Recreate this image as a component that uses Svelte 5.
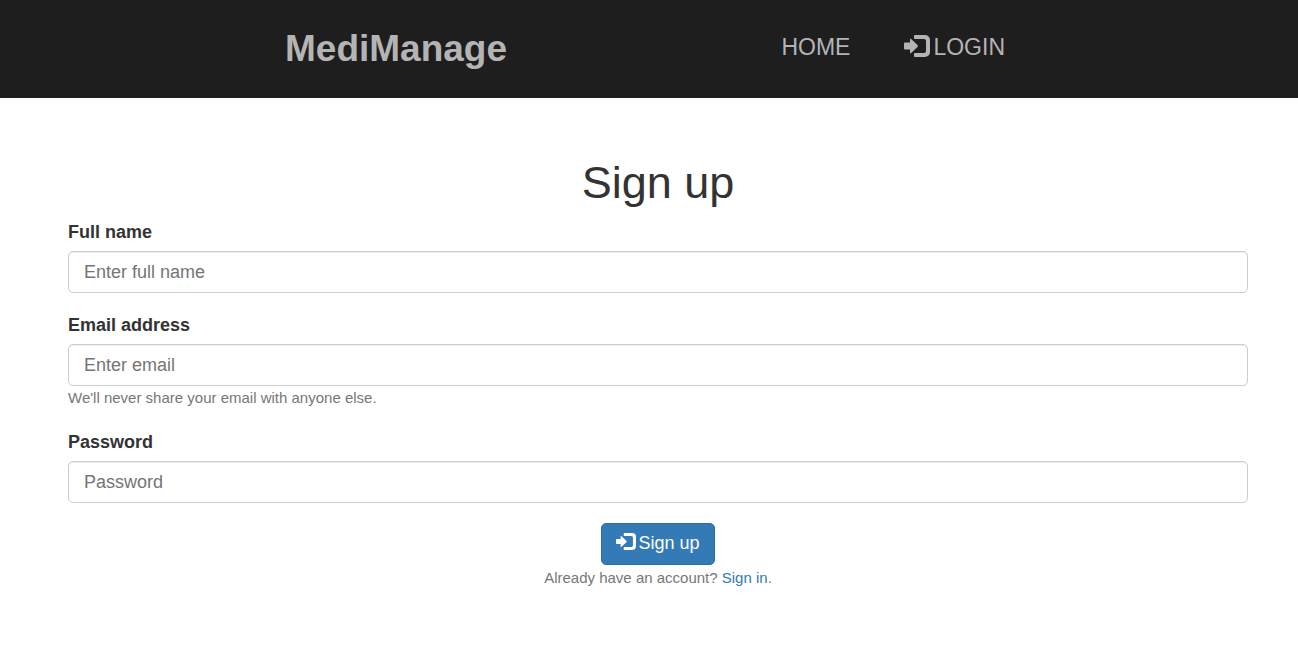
<script>
  let fullName = $state('');
  let email = $state('');
  let password = $state('');
</script>

{#snippet loginIcon()}
  <svg class="icon" viewBox="0 0 26 22" aria-hidden="true">
    <path fill="currentColor" d="M6 7.6V4.6Q6 3.2 7.2 4.1L13.5 10.1Q14.4 11 13.5 11.9L7.2 17.9Q6 18.8 6 17.4V14.4H1a1 1 0 0 1-1-1V8.6a1 1 0 0 1 1-1zM11 0h10a5 5 0 0 1 5 5v12a5 5 0 0 1-5 5H11a1 1 0 0 1-1-1v-2a1 1 0 0 1 1-1h9a2 2 0 0 0 2-2V6a2 2 0 0 0-2-2h-9a1 1 0 0 1-1-1V1a1 1 0 0 1 1-1z" />
  </svg>
{/snippet}

<header>
  <nav>
    <a class="brand" href="#home">MediManage</a>
    <a class="link" href="#home">HOME</a>
    <a class="link" href="#login">{@render loginIcon()}LOGIN</a>
  </nav>
</header>

<main>
  <h1>Sign up</h1>
  <form onsubmit={(event) => event.preventDefault()}>
    <div class="group">
      <label for="name">Full name</label>
      <input id="name" type="text" placeholder="Enter full name" bind:value={fullName} />
    </div>
    <div class="group">
      <label for="email">Email address</label>
      <input id="email" type="email" placeholder="Enter email" bind:value={email} />
      <small>We'll never share your email with anyone else.</small>
    </div>
    <div class="group">
      <label for="password">Password</label>
      <input id="password" type="password" placeholder="Password" bind:value={password} />
    </div>
    <div class="actions">
      <button type="submit">{@render loginIcon()}Sign up</button>
      <small>Already have an account? <a href="#login">Sign in</a>.</small>
    </div>
  </form>
</main>

<style>
  :global(body) {
    margin: 0;
    background: #fff;
    color: #333;
    font: 18px/26px "Liberation Sans", Arial, sans-serif;
  }
  :global(*) {
    box-sizing: border-box;
  }
  header {
    background: #1e1e1e;
    padding: 20px 16px;
  }
  nav {
    display: flex;
    align-items: center;
    max-width: 728px;
    margin: 0 auto;
    padding-right: 8px;
    gap: 54px;
  }
  nav a {
    color: #b4b4b4;
    text-decoration: none;
  }
  .brand {
    margin-right: auto;
    font-size: 37px;
    line-height: 58px;
    font-weight: bold;
  }
  .link {
    display: flex;
    align-items: center;
    gap: 3px;
    padding-bottom: 4px;
    font-size: 23px;
    line-height: 52px;
  }
  .icon {
    display: block;
    width: 26px;
    height: 22px;
    margin-bottom: 3px;
  }
  main {
    padding: 60px 50px 40px 68px;
  }
  h1 {
    margin: 0 0 11px;
    text-align: center;
    font-size: 45px;
    line-height: 50px;
    font-weight: normal;
  }
  .group {
    margin-bottom: 19px;
  }
  label {
    display: block;
    margin-bottom: 6px;
    font-weight: bold;
  }
  input {
    display: block;
    width: 100%;
    height: 42px;
    padding: 6px 15px;
    border: 1px solid #ccc;
    border-radius: 5px;
    background: #fff;
    box-shadow: inset 0 1px 1px rgba(0, 0, 0, 0.075);
    color: #555;
    font: inherit;
  }
  input::placeholder {
    color: #757575;
  }
  small {
    display: block;
    color: #777;
    font-size: 15px;
    line-height: 24px;
  }
  .actions {
    display: flex;
    flex-direction: column;
    align-items: center;
    gap: 1px;
    padding-top: 1px;
  }
  button {
    display: flex;
    align-items: center;
    gap: 2px;
    height: 42px;
    padding: 0 14px 2px;
    border: 1px solid #2e6da4;
    border-radius: 5px;
    background: #337ab7;
    color: #fff;
    font: inherit;
    cursor: pointer;
  }
  button .icon {
    width: 20px;
    height: 17px;
  }
  small a {
    color: #337ab7;
    text-decoration: none;
  }
</style>
